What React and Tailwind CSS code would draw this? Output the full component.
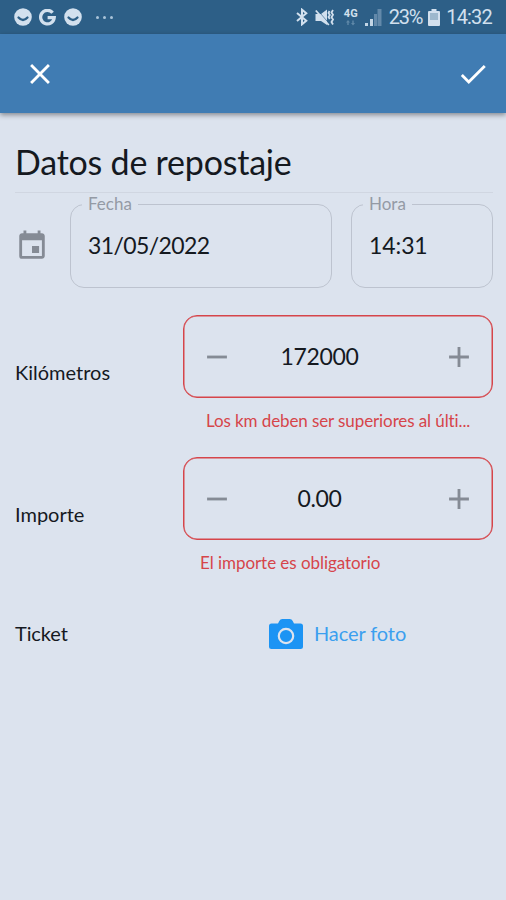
import React, { useState } from "react";
import { MdAdd, MdCheck, MdClose, MdEvent, MdRemove } from "react-icons/md";

/* ---------------- STATUS BAR ICONS ---------------- */
const FaceIcon = () => (
  <svg width="18" height="18" viewBox="0 0 18 18">
    <circle cx="9" cy="9" r="8.8" fill="#d2e0ee" />
    <path d="M4.5 9.500q4.500 5 9 0" fill="none" stroke="#2d5f87" strokeWidth="2.300" strokeLinecap="round" />
  </svg>
);

const GoogleIcon = () => (
  <svg width="17" height="17" viewBox="0 0 17 17">
    <path d="M13.6 3.7A6.8 6.8 0 1 0 15.2 8.7H8.6" fill="none" stroke="#d2e0ee" strokeWidth="3.3" />
  </svg>
);

const BluetoothIcon = () => (
  <svg width="12" height="18" viewBox="0 0 12 18">
    <path d="M1 5 10.300 12.7 6 16.3V1.700L10.300 5.3 1 13" fill="none" stroke="#d2e0ee" strokeWidth="2" />
  </svg>
);

const MutedIcon = () => (
  <svg width="20" height="17" viewBox="0 0 20 17">
    <path d="M.5 5H6l6-4.500v15.500L6 12H.5z" fill="#d2e0ee" />
    <path d="M2.800 1.500l10 11.500" stroke="#2d5f87" strokeWidth=".7" />
    <path d="M.8 1.500l13 14.500" stroke="#d2e0ee" strokeWidth="1.800" />
    <path d="M14.500 2l-1 2 1.300 2-1.300 2 1.300 2M18 1l-1.500 2.400L18 5.800l-1.500 2.400L18 10.600l-1.500 2.400L18 15.500" fill="none" stroke="#d2e0ee" strokeWidth="1.800" />
  </svg>
);

const SignalIcon = () => (
  <svg width="17" height="17" viewBox="0 0 17 17">
    <path d="M0 14h3v3H0zM5 10h3v7H5z" fill="#c3d6e6" />
    <path d="M9 5h3v12H9zM12.500 0h4v17h-4z" fill="#6389aa" />
  </svg>
);

const BatteryIcon = () => (
  <svg width="12" height="17" viewBox="0 0 12 17">
    <path d="M3.500 0h5v2H11a1 1 0 0 1 1 1v13a1 1 0 0 1-1 1H1a1 1 0 0 1-1-1V3a1 1 0 0 1 1-1h2.500z" fill="#d2e0ee" />
    <path d="M2 4h8v7H2z" fill="#9db8cd" />
  </svg>
);

const CameraIcon = () => (
  <svg width="34" height="30" viewBox="0 0 34 30">
    <path d="M10.300 2Q11.200 0 13.300 0h7.400q2.100 0 3 2L25 4.500h6.500A2.500 2.500 0 0 1 34 7v20.500a2.500 2.500 0 0 1-2.500 2.500h-29A2.500 2.500 0 0 1 0 27.500V7a2.500 2.500 0 0 1 2.500-2.500H9z" fill="#1c94f4" />
    <circle cx="17" cy="17" r="7.200" fill="none" stroke="#dce3ee" strokeWidth="2.200" />
  </svg>
);

/* ---------------- FIELDS ---------------- */
const OutlinedField = ({ label, value, className }) => (
  <fieldset className={`h-[93px] shrink-0 rounded-[14px] border border-[#bdc3cf] pl-[11px] ${className}`}>
    <legend className="h-[18px] px-[6px] text-[17px] leading-[18px] tracking-normal text-[#949aa5]">{label}</legend>
    <div className="pt-[17px] pl-[6px] text-[23px] leading-[30px]">{value}</div>
  </fieldset>
);

const Stepper = ({ value, onChange, format }) => (
  <div className="flex h-[83px] w-[310px] items-center justify-between rounded-[14px] border border-[#d6454a] px-4 text-[#858b95] shadow-[inset_0_0_0_0.5px_#d6454a]">
    <button onClick={() => onChange(value - 1)}>
      <MdRemove size={34} />
    </button>
    <span className="mr-[37px] pb-px text-[23px] leading-[30px] tracking-[-0.3px] text-[#15191f]">{format(value)}</span>
    <button onClick={() => onChange(value + 1)}>
      <MdAdd size={34} />
    </button>
  </div>
);

const App = () => {
  const [km, setKm] = useState(172000);
  const [amount, setAmount] = useState(0);

  return (
    <div className="min-h-screen w-full bg-[#dce3ee] font-['Lato',sans-serif] text-[#15191f]">

      {/* Status bar */}
      <div className="flex h-[34px] items-center justify-between bg-[#2d5f87] pr-[14px] pl-[14px] text-[#d2e0ee]">
        <div className="flex items-center gap-[7px]">
          <FaceIcon />
          <GoogleIcon />
          <span className="ml-px"><FaceIcon /></span>
          <div className="ml-[7px] flex gap-[4px]">
            <span className="size-[3px] rounded-full bg-[#a9c3d9]" />
            <span className="size-[3px] rounded-full bg-[#a9c3d9]" />
            <span className="size-[3px] rounded-full bg-[#a9c3d9]" />
          </div>
        </div>
        <div className="flex items-center font-['Roboto',sans-serif] text-[20px]">
          <BluetoothIcon />
          <span className="ml-[7px]"><MutedIcon /></span>
          <div className="ml-[9px] flex h-[17px] flex-col items-center text-[11px] leading-[9px] font-bold">
            4G
            <svg width="9" height="6" viewBox="0 0 9 6" className="mt-[2px]">
              <path d="M2 0 4 2.500H2.700V5H1.300V2.500H0zM7 5.500 5 3h1.300V.5h1.400V3H9z" fill="#5f88a8" />
            </svg>
          </div>
          <span className="ml-[7px]"><SignalIcon /></span>
          <span className="ml-[7px] tracking-[-1.2px]">23%</span>
          <span className="ml-[6px]"><BatteryIcon /></span>
          <span className="ml-[6px] tracking-[-0.8px]">14:32</span>
        </div>
      </div>

      {/* App bar */}
      <header className="flex h-[79px] items-center justify-between bg-[#407cb3] pr-[16px] pl-[23px] text-white shadow-[0_2px_5px_rgba(0,0,0,0.4)]">
        <button><MdClose size={34} /></button>
        <button><MdCheck size={34} /></button>
      </header>

      <main className="pt-[27px] pr-[13px] pl-[15px]">
        <h1 className="h-[53px] border-b border-[#d0d6e1] text-[34px] leading-[44px] tracking-[-0.22px]">Datos de repostaje</h1>

        <div className="mt-[2px] flex items-center">
          <span className="w-[55px] pt-[9px] text-[#858b95]"><MdEvent size={34} /></span>
          <OutlinedField label="Fecha" value="31/05/2022" className="w-[262px] tracking-[-0.6px]" />
          <OutlinedField label="Hora" value="14:31" className="ml-[19px] w-[142px] tracking-[-0.1px]" />
        </div>

        {/* Kilómetros */}
        <div className="mt-[27px] flex h-[142px] justify-between">
          <label className="pt-[44px] text-[20px] leading-[26px]">Kilómetros</label>
          <div>
            <Stepper value={km} onChange={setKm} format={(v) => v} />
            <p className="mt-[12px] ml-[23px] text-[17px] leading-[22px] tracking-[-0.1px] text-[#d6454a]">Los km deben ser superiores al últi...</p>
          </div>
        </div>

        {/* Importe */}
        <div className="flex h-[142px] justify-between">
          <label className="pt-[44px] text-[20px] leading-[26px]">Importe</label>
          <div>
            <Stepper value={amount} onChange={setAmount} format={(v) => v.toFixed(2)} />
            <p className="mt-[12px] ml-[17px] text-[17px] leading-[22px] tracking-[-0.05px] text-[#d6454a]">El importe es obligatorio</p>
          </div>
        </div>

        {/* Ticket */}
        <div className="flex h-[70px] items-center">
          <span className="w-[254px] pb-[2px] text-[20px] tracking-[-0.1px]">Ticket</span>
          <button className="flex items-center gap-[11px] text-[20px] tracking-[-0.1px] text-[#3b9fef]">
            <CameraIcon />
            <span className="pb-[2px]">Hacer foto</span>
          </button>
        </div>
      </main>
    </div>
  );
};

export default App;
